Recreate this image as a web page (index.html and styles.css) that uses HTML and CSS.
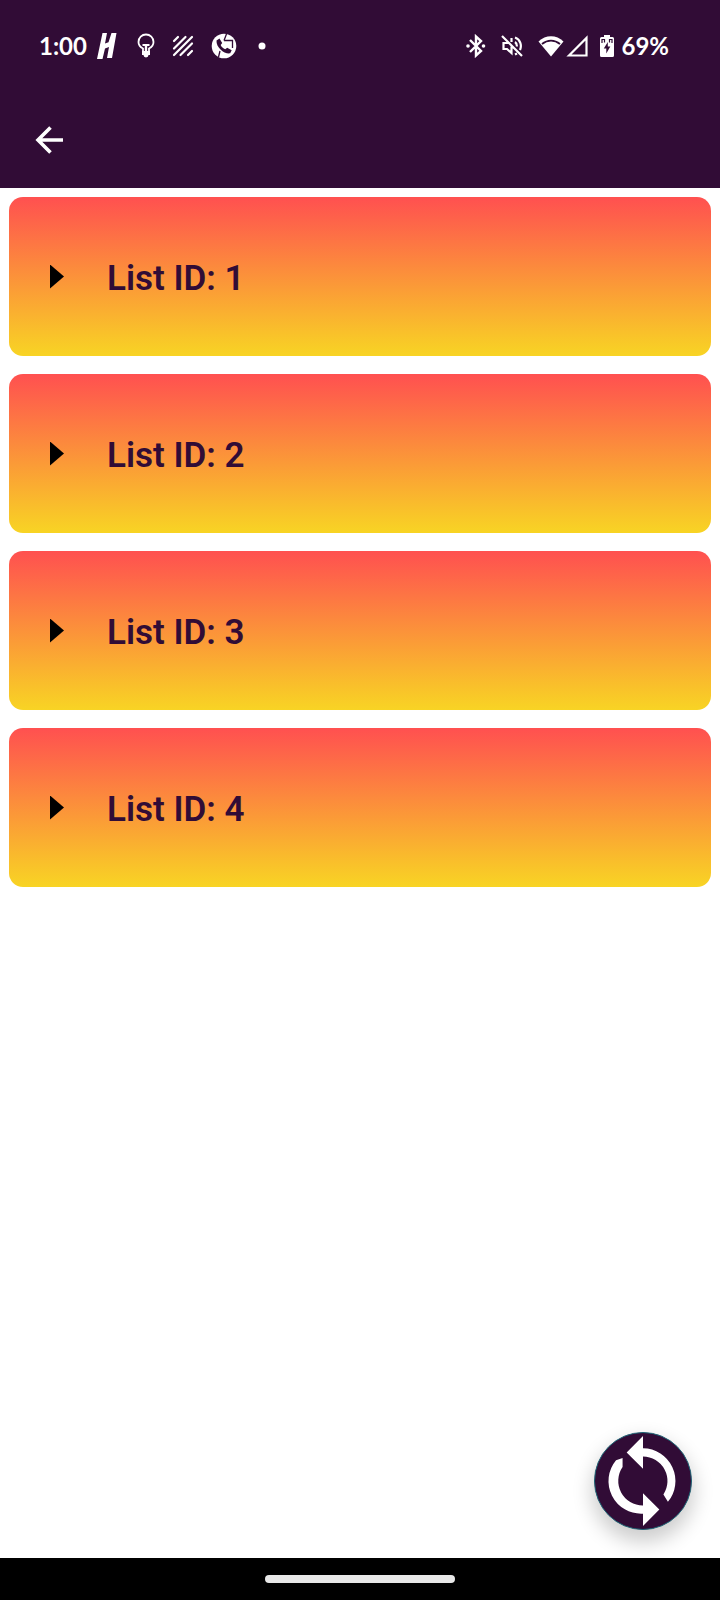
FILE: index.html
```html
<!DOCTYPE html>
<html lang="en">
<head>
<meta charset="utf-8">
<meta name="viewport" content="width=device-width, initial-scale=1">
<title>Lists</title>
<link rel="stylesheet" href="styles.css">
</head>
<body>
<div class="screen">
  <header class="header">
    <div class="status">
      <div class="status-group status-left">
        <span class="status-text">1:00</span>
        <svg class="icon icon-brand" width="20" height="28" viewBox="0 0 20 28" fill="currentColor" aria-hidden="true"><path d="M5.500 1h4.500L8 11.500l3.500-1.200L14.500 1H19.500L15 26H10l2-11-4 1.500L5.500 27H0z"/></svg>
        <svg class="icon" width="18" height="26" viewBox="0 0 18 26" aria-hidden="true"><path d="M6 19v-3.500C3 14 1.500 12 1.500 9a7.500 7.500 0 0 1 15 0c0 3-1.500 5-4.500 6.500V19" fill="none" stroke="currentColor" stroke-width="1.800"/><path d="M5.500 11h7v2h-2.300v5H13v4h-1.500a2.500 2.500 0 0 1-5 0H5v-4h2.800v-5H5.500z" fill="currentColor"/></svg>
        <svg class="icon" width="22" height="22" viewBox="0 0 22 22" fill="none" stroke="currentColor" stroke-width="2.200" stroke-linecap="round" aria-hidden="true"><path d="M2 6l4-4M2 13.500L13.500 2M2 20L20 2M8.500 20L20 8.500M16 20l4-4"/></svg>
        <svg class="icon" width="26" height="26" viewBox="0 0 26 26" aria-hidden="true"><circle cx="13" cy="13" r="12.300" fill="currentColor"/><path class="ink-fill" d="M5.500 7.500l3-2 2.700 4.500-1.500 2c.8 2 2.500 3.500 4.500 4.300l2-1.500 4.500 2.500-1.500 3C14 21.500 5 15 5.500 7.500z"/><path class="ink-line" d="M13 7.500L15.500 1M13 7.500h8.500v7.500M9 18l-1.500 6" fill="none" stroke-width="1.300"/></svg>
        <svg class="icon icon-dot" width="8" height="8" viewBox="0 0 8 8" fill="currentColor" aria-hidden="true"><circle cx="4" cy="4" r="3.500"/></svg>
      </div>
      <div class="status-group status-right">
        <svg class="icon" width="20" height="24" viewBox="0 0 20 24" fill="none" stroke="currentColor" stroke-width="2.400" aria-hidden="true"><path d="M4 6l11 11-5 4.500v-19L15 7 4 18"/><circle cx="2" cy="12" r="1.800" fill="currentColor" stroke="none"/><circle cx="17.500" cy="12" r="1.800" fill="currentColor" stroke="none"/></svg>
        <svg class="icon icon-mute" width="22" height="24" viewBox="0 0 22 24" fill="none" stroke="currentColor" stroke-width="2.200" aria-hidden="true"><path d="M1 2l20 20M7 9H2.500v6H6l4.500 4v-6.500M10.500 4v4M14 8c1.500 1 2 2.500 2 4.500M14 3.500c5.500 2 7 8 5 12.500M14 20.500l2-1"/></svg>
        <svg class="icon icon-wifi" width="26" height="22" viewBox="0 0 26 22" aria-hidden="true"><path d="M.5 6.500C7.500-.5 18.500-.5 25.500 6.500L13 21.500z" fill="currentColor"/><path class="ink-line" d="M4 9C9.500 4.500 16.500 4.500 22 9" fill="none" stroke-width="1.800"/></svg>
        <svg class="icon icon-signal" width="22" height="22" viewBox="0 0 22 22" fill="none" stroke="currentColor" stroke-width="2.200" aria-hidden="true"><path d="M3 20.500L20.500 3v17.500z"/></svg>
        <svg class="icon icon-battery" width="14" height="24" viewBox="0 0 14 24" aria-hidden="true"><path d="M4 1h6v2h2.500A1.500 1.500 0 0 1 14 4.500v17a1.500 1.500 0 0 1-1.500 1.500h-11A1.500 1.500 0 0 1 0 21.500v-17A1.500 1.500 0 0 1 1.500 3H4z" fill="currentColor"/><path class="ink-fill" d="M7.800 8L3.800 14.500h2.500v5l4-7H7.800z"/><path class="ink-line" d="M2 9V5.500h2.500v3M9.500 8.500v-3H12V9" fill="none" stroke-width="1.200"/></svg>
        <span class="status-text">69%</span>
      </div>
    </div>
    <nav class="toolbar">
      <button class="back" type="button" aria-label="Back">
        <svg class="icon" width="30" height="30" viewBox="0 0 30 30" fill="none" stroke="currentColor" stroke-width="3.600" aria-hidden="true"><path d="M29 15H4M16.500 2.500L4 15l12.500 12.500"/></svg>
      </button>
    </nav>
  </header>
  <main class="content">
    <button class="card" type="button"><span class="arrow"></span><span class="label">List ID: 1</span></button>
    <button class="card" type="button"><span class="arrow"></span><span class="label">List ID: 2</span></button>
    <button class="card" type="button"><span class="arrow"></span><span class="label">List ID: 3</span></button>
    <button class="card" type="button"><span class="arrow"></span><span class="label">List ID: 4</span></button>
  </main>
  <button class="fab" type="button" aria-label="Refresh">
    <svg class="icon" width="96" height="96" viewBox="0.250 0.250 23.500 23.500" fill="currentColor" aria-hidden="true"><path d="M12 4V1L8 5l4 4V6a6 6 0 0 1 5 9.300l1.100 1.800A8 8 0 0 0 12 4zM12 18A6 6 0 0 1 7 8.600V6.400L5.400 6.900A8 8 0 0 0 12 20v3l4-4-4-4z"/></svg>
  </button>
  <footer class="navbar"><span class="handle"></span></footer>
</div>
</body>
</html>
```
FILE: styles.css
```css
* {
  box-sizing: border-box;
}

body {
  margin: 0;
  background: #fff;
  font-family: Roboto, "Liberation Sans", sans-serif;
}

button {
  border: 0;
  margin: 0;
  padding: 0;
  font: inherit;
  cursor: pointer;
}

.screen {
  position: relative;
  display: flex;
  flex-direction: column;
  min-height: 100vh;
}

.header {
  background: #310c36;
  color: #fff;
}

.status {
  display: flex;
  justify-content: space-between;
  height: 92px;
  padding: 0 51px 0 39px;
}

.status-group {
  display: flex;
  align-items: center;
}

.status-left {
  gap: 17px;
}

.icon-brand {
  margin: 0 3px 0 -7px;
}

.icon-dot {
  margin-left: 4px;
}

.status-text {
  font-family: Lato, "Open Sans", sans-serif;
  font-size: 24px;
  font-weight: 700;
  line-height: 32px;
}

.icon {
  display: block;
  flex: none;
}

.icon-mute {
  margin-left: 15px;
}

.icon-wifi {
  margin-left: 15px;
}

.icon-signal {
  margin-left: 2px;
}

.icon-battery {
  margin: 0 7px 0 12px;
}

.ink-fill {
  fill: #310c36;
}

.ink-line {
  stroke: #310c36;
}

.toolbar {
  display: flex;
  align-items: center;
  height: 96px;
  padding: 0 34px;
}

.back {
  background: none;
  color: inherit;
}

.content {
  display: flex;
  flex: 1;
  flex-direction: column;
  gap: 18px;
  padding: 9px;
}

.card {
  display: flex;
  align-items: center;
  gap: 43px;
  height: 159px;
  padding: 0 41px;
  border-radius: 14px;
  background: linear-gradient(#ff5050, #f8d424);
  color: #310c36;
  font-size: 35px;
  font-weight: 600;
  line-height: 44px;
}

.label {
  padding-top: 4px;
}

.arrow {
  width: 14px;
  height: 24px;
  background: #000;
  clip-path: polygon(0 0, 100% 50%, 0 100%);
}

.fab {
  position: absolute;
  right: 28px;
  bottom: 70px;
  border: 1px solid #1c6475;
  border-radius: 50%;
  background: #310c36;
  color: #fff;
  box-shadow: 0 10px 20px 2px rgba(0, 0, 0, 0.2);
}

.navbar {
  display: flex;
  align-items: center;
  justify-content: center;
  height: 42px;
  background: #000;
}

.handle {
  width: 190px;
  height: 8px;
  border-radius: 4px;
  background: #e8e8e8;
}
```
